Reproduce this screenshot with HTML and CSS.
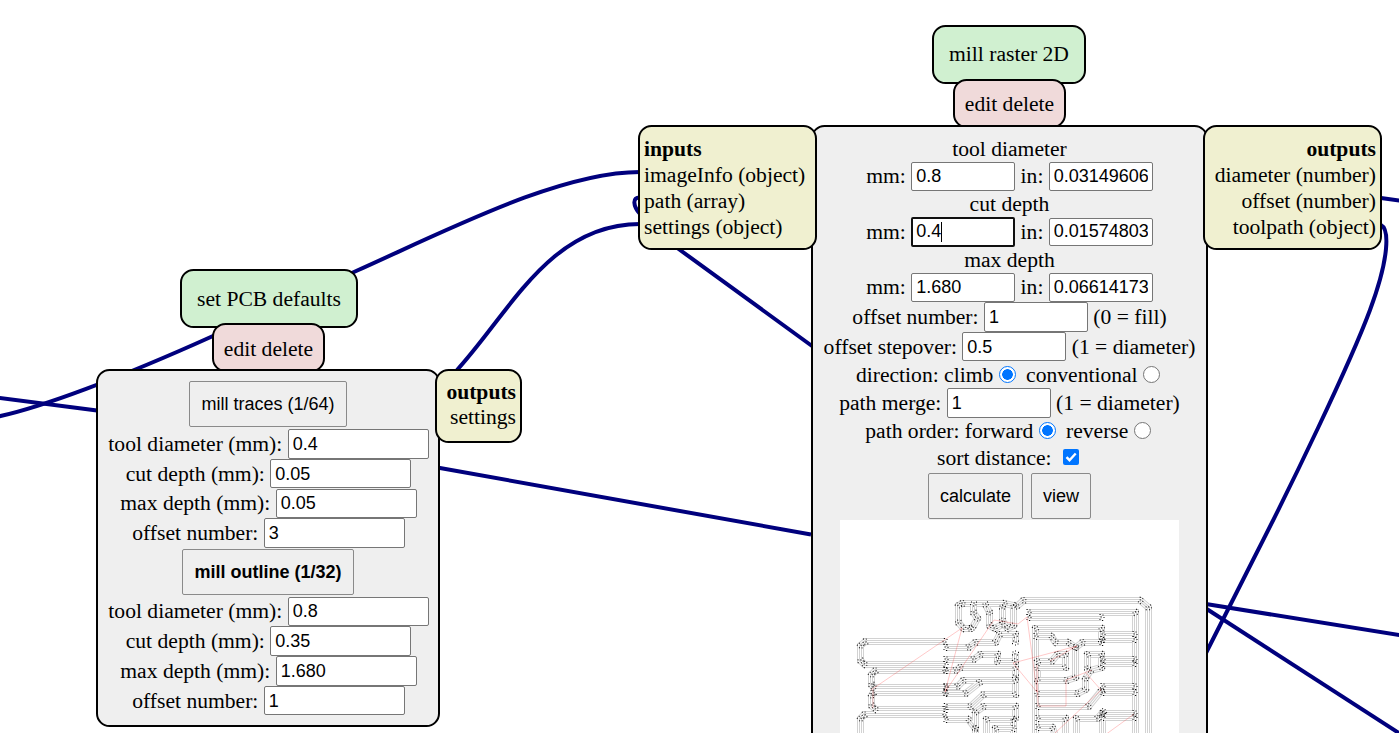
FILE: index.html
```html
<!DOCTYPE html>
<html lang="en">
<head>
<meta charset="utf-8">
<title>mods</title>
<link rel="stylesheet" href="styles.css">
</head>
<body>
<main class="canvas">
  <svg class="wires" viewBox="0 0 1399 733">
    <path d="M-4 397.500L97 410.500L440 468L811 534.500"/>
    <path d="M-4 417C40 408 120 378 213 336L354 272C450 229 560 172 640 172"/>
    <path d="M457 370C510 312 550 224 640 224"/>
    <path d="M640 197.500C632 197 633 206 640 214L678 248.500L812 346"/>
    <path d="M1381 198L1402 201"/>
    <path d="M1381 225C1389 229 1390 256 1370 310C1350 364 1290 488 1253 560L1206 653"/>
    <path d="M1206 604L1402 635.500"/>
    <path d="M1206 608.500L1402 735"/>
  </svg>

  <div class="box title title-pcb">set PCB defaults</div>
  <div class="box edit edit-pcb">edit delete</div>
  <section class="box module module-pcb">
    <div class="row action"><button>mill traces (1/64)</button></div>
    <label class="row field">tool diameter (mm): <input value="0.4"></label>
    <label class="row field">cut depth (mm): <input value="0.05"></label>
    <label class="row field">max depth (mm): <input value="0.05"></label>
    <label class="row field">offset number: <input value="3"></label>
    <div class="row action second"><button class="strong">mill outline (1/32)</button></div>
    <label class="row field">tool diameter (mm): <input value="0.8"></label>
    <label class="row field">cut depth (mm): <input value="0.35"></label>
    <label class="row field">max depth (mm): <input value="1.680"></label>
    <label class="row field">offset number: <input value="1"></label>
  </section>
  <div class="box ports outputs ports-pcb"><b>outputs</b><span>settings</span></div>

  <div class="box title title-mill">mill raster 2D</div>
  <div class="box edit edit-mill">edit delete</div>
  <section class="box module module-mill">
    <div class="row caption">tool diameter</div>
    <div class="row field pair">mm: <input value="0.8"> in: <input value="0.03149606"></div>
    <div class="row caption">cut depth</div>
    <div class="row field pair">mm: <span class="active"><input value="0.4"><i class="caret"></i></span> in: <input value="0.01574803"></div>
    <div class="row caption">max depth</div>
    <div class="row field pair">mm: <input value="1.680"> in: <input value="0.06614173"></div>
    <div class="row field first-single">offset number: <input value="1"> (0 = fill)</div>
    <div class="row field">offset stepover: <input value="0.5"> (1 = diameter)</div>
    <div class="row options">direction: climb<span class="radio on"></span>conventional<span class="radio"></span></div>
    <div class="row field">path merge: <input value="1"> (1 = diameter)</div>
    <div class="row options">path order: forward<span class="radio on"></span>reverse<span class="radio"></span></div>
    <div class="row options sort">sort distance: <svg class="check" viewBox="0 0 16 16"><rect width="16" height="16" rx="2" fill="#0075ff"/><path d="M3.500 8.200L6.500 11.200L12.700 4.500" fill="none" stroke="#fff" stroke-width="2.400"/></svg></div>
    <div class="row action tools"><button>calculate</button><button>view</button></div>
    <svg class="preview" viewBox="840 520 339 339">
      <defs>
        <marker id="node" markerUnits="userSpaceOnUse" markerWidth="10" markerHeight="10" refX="5" refY="5" orient="auto">
          <path d="M3 2h1.200M6 2.500h1M4 4.500h1.200M7 5h1M3 7h1M5.500 8h1.200" stroke="#111" stroke-width="1" fill="none"/>
        </marker>
        <g id="traces" transform="translate(.5 .5)">
          <path d="M945 641H865L860 645V660L864 664H945"/>
          <path d="M945 670H875L871 674V684L873 687H945"/>
          <path d="M945 692H873L871 695V705L875 709H945"/>
          <path d="M945 714H864L860 718V745"/>
          <path d="M945 647H968L975 642H995L999 634H1015V642"/>
          <path d="M945 659H973L980 654H997V661H1015V653"/>
          <path d="M945 670H955L960 667H1015V676"/>
          <path d="M945 686H957L963 680H1015V694H983L970 706H945"/>
          <path d="M945 693H965L979 682"/>
          <path d="M945 719H968L975 728V712L983 706H1015V718"/>
          <path d="M975 745V728M986 745V719H1013V745M995 745V728H1013"/>
          <path d="M970 628L963 628L958 622V605L962 603H1004L1013 605V625L1007 628L1002 620V607"/>
          <path d="M973 603V612L977 618L972 627M985 604L989 612V625L994 628L1002 624"/>
          <path d="M1016 606L1023 600H1140L1148 607V745"/>
          <path d="M1028 617H1101M1028 612H1135V745"/>
          <path d="M1035 745V628H1101V640"/>
          <path d="M1035 636H1051L1055 642H1068L1075 647L1082 642H1101"/>
          <path d="M1075 647V677L1066 680H1037V661H1051L1057 654H1065V667H1037"/>
          <path d="M1087 668V654H1101V667L1090 670L1085 678V689L1077 693H1037"/>
          <path d="M1037 706H1088L1101 690M1037 718H1065V745M1037 727H1052L1058 745"/>
          <path d="M1076 745V718H1097L1103 711M1102 745V714"/>
          <path d="M1102 634H1134M1102 639H1134M1102 659H1134M1102 663H1134M1102 686H1134M1102 692H1134M1102 713H1134M1102 717H1134"/>
        </g>
      </defs>
      <use href="#traces" class="edge outer"/>
      <use href="#traces" class="gap wide"/>
      <use href="#traces" class="edge inner"/>
      <use href="#traces" class="gap thin"/>
      <use href="#traces" class="dots"/>
      <path class="moves" d="M871 690L962 628L945 692L994 620L1018 624L1027 617L1037 692L1013 663L1077 646L1050 661M1037 665L1038 706H1066V680L1092 670M1086 673L1101 690L1054 734M1134 714L1105 735M873 690V708"/>
    </svg>
  </section>
  <div class="box ports inputs-mill"><b>inputs</b><span>imageInfo (object)</span><span>path (array)</span><span>settings (object)</span></div>
  <div class="box ports outputs outputs-mill"><b>outputs</b><span>diameter (number)</span><span>offset (number)</span><span>toolpath (object)</span></div>
</main>
</body>
</html>
```
FILE: styles.css
```css
* { box-sizing: border-box; }
body {
  margin: 0;
  background: #fff;
  color: #000;
  font: 21.6px/26px "Liberation Serif", "Times New Roman", serif;
}
.canvas { position: relative; width: 1399px; height: 733px; overflow: hidden; }
.wires { position: absolute; left: 0; top: 0; width: 1399px; height: 733px; fill: none; stroke: #00007d; stroke-width: 4; }

.box { position: absolute; border: 2px solid #000; border-radius: 13.5px; white-space: nowrap; }
.title { display: flex; align-items: center; justify-content: center; height: 59px; background: #d0f0d0; }
.edit { height: 49px; padding-top: 11px; text-align: center; background: #f0dada; }
.module { background: #efefef; }
.ports { display: flex; flex-direction: column; padding: 8.5px 4px 0; background: #f0f0d0; }
.outputs { text-align: right; }

.title-pcb { left: 180px; top: 269px; width: 178px; }
.edit-pcb { left: 212px; top: 323px; width: 113px; }
.module-pcb { left: 96px; top: 369px; width: 344px; height: 358px; padding-top: 10px; }
.ports-pcb { left: 435px; top: 369px; width: 87px; height: 74px; line-height: 25.5px; }

.title-mill { left: 932px; top: 25px; width: 154px; padding-bottom: 2px; }
.edit-mill { left: 953px; top: 79px; width: 113px; padding-top: 10px; }
.module-mill { left: 811px; top: 125px; width: 397px; height: 760px; padding-top: 8.5px; }
.inputs-mill { left: 638px; top: 125px; width: 179px; height: 125px; }
.outputs-mill { left: 1203px; top: 125px; width: 179px; height: 125px; }

.row { display: flex; align-items: center; justify-content: center; gap: 5.4px; }
.field { height: 29.75px; }
.caption { height: 26px; }
.pair { height: 29.5px; }
.action { height: 48px; align-items: flex-start; }
.second { height: 48.5px; padding-top: 1px; }
.options { height: 26.6px; padding-right: 3px; }
.sort { height: 27px; }
.tools { gap: 8px; height: 49px; padding-top: 1.5px; }

input {
  width: 141px;
  height: 29.5px;
  margin: 0;
  padding: 1px 4px 0;
  border: 1px solid #767676;
  border-radius: 2px;
  background: #fff;
  color: #000;
  font: 18px "Liberation Sans", Arial, sans-serif;
}
.module-pcb input { margin-right: -1px; }
.module-mill input { width: 104px; }
.pair input { height: 28.5px; padding-top: 0; }
.active { position: relative; display: flex; }
.active input { border: 2px solid #101010; padding-left: 3px; height: 29.5px; }
.caret { position: absolute; left: 30px; top: 5px; width: 1px; height: 20px; background: #000; }

button {
  height: 46px;
  padding: 1px 11px 0;
  border: 1px solid #8a8a8a;
  border-radius: 2px;
  background: #efefef;
  color: #000;
  font: 18px "Liberation Sans", Arial, sans-serif;
}
.strong { font-weight: bold; padding-top: 0; }

.radio { width: 17px; height: 17px; border: 1px solid #767676; border-radius: 50%; background: #fff; }
.radio.on { margin-right: 5px; border: 1.5px solid #0075ff; background: radial-gradient(circle, #0075ff 5px, #fff 5.600px); }
.radio, .check { margin-bottom: 1px; }
.check { width: 16px; height: 16px; margin-left: 6px; }

.preview { display: block; width: 339px; height: 339px; margin: 0 auto; background: #fff; fill: none; }
.edge { stroke: #d2d2d2; }
.gap { stroke: #fff; }
.outer { stroke-width: 7px; }
.wide { stroke-width: 5px; }
.inner { stroke-width: 3px; }
.thin { stroke-width: 1px; }
.dots { stroke: none; marker-start: url(#node); marker-mid: url(#node); marker-end: url(#node); }
.moves { stroke: #ff3030; stroke-opacity: .38; stroke-width: .7; }
```
